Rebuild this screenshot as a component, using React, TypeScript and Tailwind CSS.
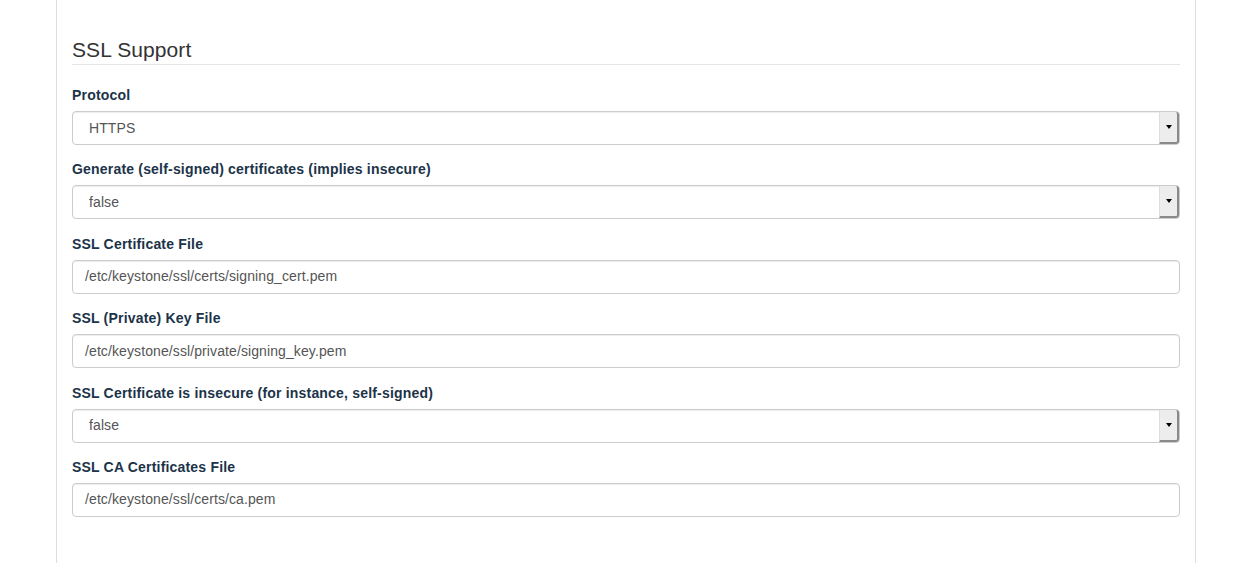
const FONT = { fontFamily: '"Liberation Sans", Arial, Helvetica, sans-serif' };

type Field =
  | { kind: 'select'; label: string; value: string }
  | { kind: 'input'; label: string; value: string };

const fields: Field[] = [
  { kind: 'select', label: 'Protocol', value: 'HTTPS' },
  { kind: 'select', label: 'Generate (self-signed) certificates (implies insecure)', value: 'false' },
  { kind: 'input', label: 'SSL Certificate File', value: '/etc/keystone/ssl/certs/signing_cert.pem' },
  { kind: 'input', label: 'SSL (Private) Key File', value: '/etc/keystone/ssl/private/signing_key.pem' },
  { kind: 'select', label: 'SSL Certificate is insecure (for instance, self-signed)', value: 'false' },
  { kind: 'input', label: 'SSL CA Certificates File', value: '/etc/keystone/ssl/certs/ca.pem' },
];

function SelectBox({ value }: { value: string }) {
  return (
    <div className="relative h-[34px] w-full rounded-[4px] border border-[#cccccc] bg-white shadow-[inset_0_1px_1px_rgba(0,0,0,0.075)]">
      <div className="flex h-full items-center pl-[16px] text-[14px] tracking-[0.1px] text-[#555555]">{value}</div>
      <div className="absolute right-0 top-0 bottom-0 flex w-[20px] items-center justify-center rounded-r-[3px] border-l border-l-[#dddddd] border-r-2 border-b-2 border-r-[#8a8a8a] border-b-[#8a8a8a] bg-[#ededed]">
        <span className="block h-0 w-0 border-x-[3px] border-t-[4px] border-x-transparent border-t-black" />
      </div>
    </div>
  );
}

function InputBox({ value }: { value: string }) {
  return (
    <div className="flex h-[34px] w-full items-center rounded-[4px] border border-[#cccccc] bg-white pl-[12px] text-[14px] tracking-[0.1px] text-[#555555] shadow-[inset_0_1px_1px_rgba(0,0,0,0.075)]">
      {value}
    </div>
  );
}

export default function App() {
  return (
    <div className="min-h-screen bg-white" style={FONT}>
      <div className="mx-auto w-[1170px] px-[15px]">
        <div className="min-h-[563px] border-x border-[#dddddd] px-[15px] pt-[35px]">
          <div className="mb-[20px] border-b border-[#e5e5e5] text-[21px] leading-[29px] tracking-[0.1px] text-[#333333]">
            SSL Support
          </div>
          {fields.map((f) => (
            <div key={f.label} className="mb-[14.4px]">
              <div className="mb-[5px] text-[14px] font-bold leading-[21px] tracking-[0.19px] text-[#1c3349]">{f.label}</div>
              {f.kind === 'select' ? <SelectBox value={f.value} /> : <InputBox value={f.value} />}
            </div>
          ))}
        </div>
      </div>
    </div>
  );
}
